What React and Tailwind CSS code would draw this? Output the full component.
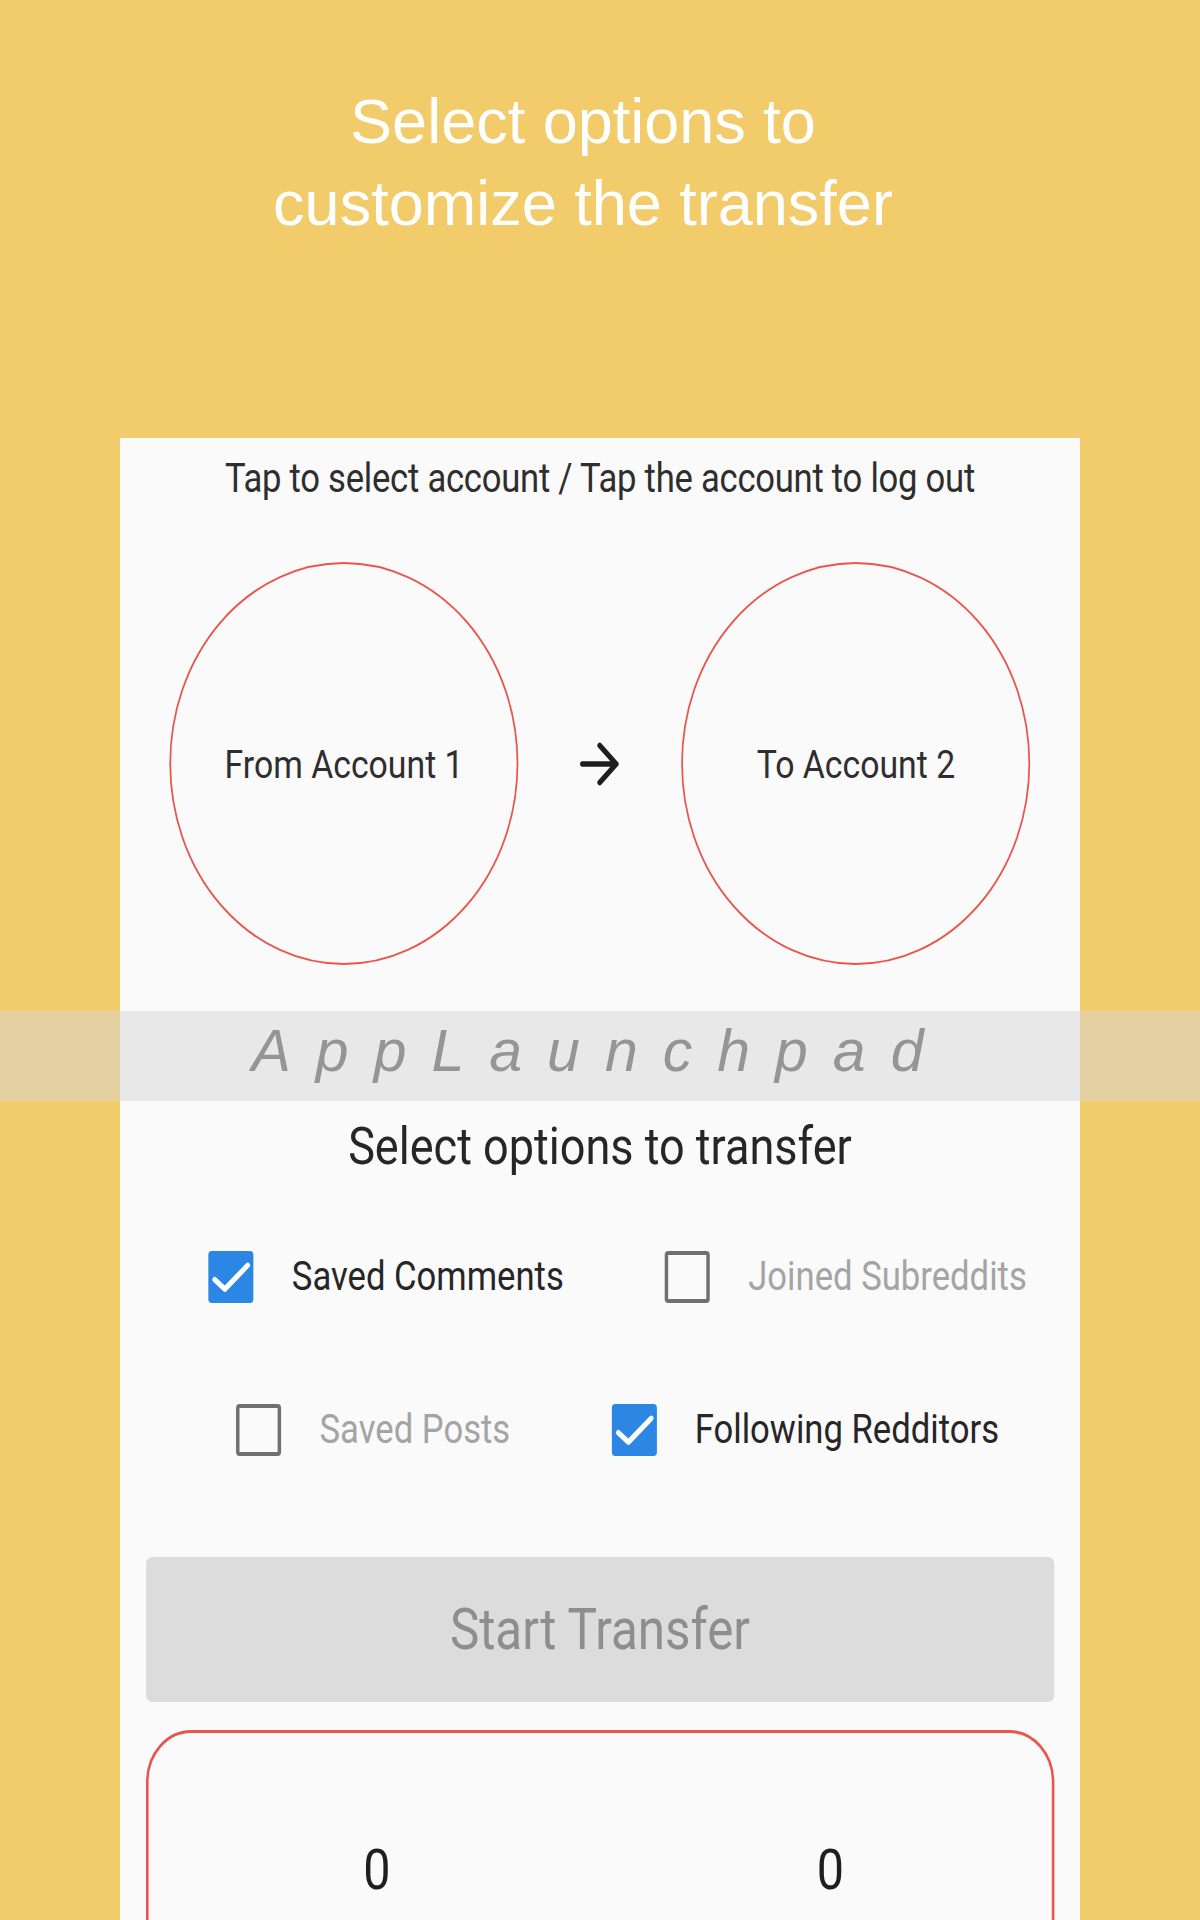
import React from "react";

function Box({ checked }) {
  if (checked) {
    return (
      <div className="w-[52px] h-[52px] rounded-[4px] bg-[#2B87E3] flex items-center justify-center shrink-0">
        <svg viewBox="0 0 24 24" className="w-[52px] h-[52px]" fill="none">
          <path
            d="M3.4 13.2L8.8 17.6L21 6.6"
            stroke="#ffffff"
            strokeWidth="2.5"
            strokeLinecap="round"
            strokeLinejoin="round"
          />
        </svg>
      </div>
    );
  }
  return <div className="w-[52px] h-[52px] rounded-[4px] border-[4.5px] border-[#707070] shrink-0" />;
}

function Option({ label, checked }) {
  return (
    <div className="flex items-center gap-[44px]">
      <Box checked={checked} />
      <span
        className={
          "text-[40px] leading-none whitespace-nowrap " +
          (checked ? "text-[#262626]" : "text-[#a4a4a4]")
        }
      >
        {label}
      </span>
    </div>
  );
}

function Account({ label }) {
  return (
    <div className="w-[403px] h-[403px] rounded-full border-[2.5px] border-[#E8554D] flex items-center justify-center pt-[3px]">
      <span className="text-[39px] leading-none text-[#2e2e2e]">{label}</span>
    </div>
  );
}

export default function App() {
  return (
    <div className="relative h-[1920px] overflow-hidden bg-[#F2CB6A] flex flex-col">
      {/* heading on the yellow */}
      <div className="pt-[80px] pr-[34px] text-center text-white text-[63px] leading-[82px] font-['Liberation_Sans',Arial,sans-serif]">
        <div>Select options to</div>
        <div>customize the transfer</div>
      </div>

      {/* phone screen */}
      <div className="mt-[194px] mx-[120px] flex-1 bg-[#FAFAFA] overflow-hidden">
        {/* the screenshot is squeezed horizontally */}
        <div className="w-[1108.5px] origin-top-left [transform:scaleX(0.866)] font-['Roboto',sans-serif] pt-[21px] flex flex-col">
          <div className="text-center text-[40px] leading-none tracking-[-0.3px] text-[#2e2e2e] whitespace-nowrap">
            Tap to select account / Tap the account to log out
          </div>

          <div className="mt-[63px] flex items-center justify-center gap-[71px]">
            <Account label="From Account 1" />
            <svg viewBox="0 0 46 44" className="w-[46px] h-[44px]" fill="none">
              <path
                d="M3 22H42M23 3.5L42 22L23 40.5"
                stroke="#1e1e1e"
                strokeWidth="5.5"
                strokeLinecap="round"
                strokeLinejoin="round"
              />
            </svg>
            <Account label="To Account 2" />
          </div>

          <div className="mt-[156px] text-center text-[52px] leading-none text-[#262626]">
            Select options to transfer
          </div>

          <div className="mt-[78px] pl-[41px] flex items-center justify-center gap-[117px]">
            <Option label="Saved Comments" checked />
            <Option label="Joined Subreddits" />
          </div>

          <div className="mt-[101px] pl-[41px] flex items-center justify-center gap-[117px]">
            <Option label="Saved Posts" />
            <Option label="Following Redditors" checked />
          </div>

          <div className="mt-[101px] mx-[30px] h-[145px] rounded-[7px] bg-[#DCDCDC] flex items-center justify-center">
            <span className="text-[57px] leading-none text-[#8e8e8e]">Start Transfer</span>
          </div>

          <div className="mt-[28px] mx-[30px] h-[420px] rounded-[52px] border-[3px] border-[#E6564E] grid grid-cols-2 items-start pt-[109px]">
            <div className="pl-[6px] text-center text-[56px] leading-none text-[#1f1f1f]">0</div>
            <div className="pl-[11px] text-center text-[56px] leading-none text-[#1f1f1f]">0</div>
          </div>
        </div>
      </div>

      {/* watermark band over everything */}
      <div className="absolute left-0 right-0 top-[1011px] h-[90px] bg-[#d6d6d6]/50 flex items-center justify-center pb-[10px]">
        <span className="italic text-[59px] leading-none tracking-[25px] text-[#959595] font-['Liberation_Sans',Arial,sans-serif]">
          AppLaunchpad
        </span>
      </div>
    </div>
  );
}
